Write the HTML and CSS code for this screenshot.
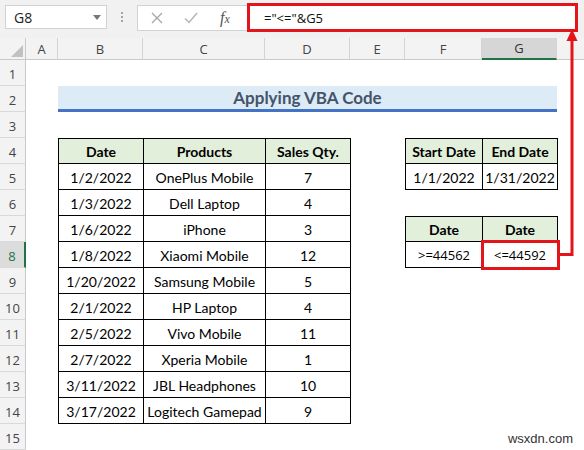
FILE: index.html
```html
<!DOCTYPE html>
<html lang="en">
<head>
    <meta charset="UTF-8">
    <title>Applying VBA Code</title>
    <link rel="stylesheet" href="styles.css">
</head>
<body>
<div class="app">
    <!-- Name box + formula bar -->
    <div class="formula-bar">
        <div class="name-box">
            <span>G8</span>
            <span class="caret"></span>
        </div>
        <div class="grip"><i></i><i></i><i></i></div>
        <div class="fx-box">
            <div class="fx-buttons">
                <svg class="btn-icon" width="12" height="12" viewBox="0 0 12 12">
                    <path d="M1 1 L11 11 M11 1 L1 11" stroke="#a6a6a6" stroke-width="1.3" fill="none"/>
                </svg>
                <svg class="btn-icon" width="14" height="12" viewBox="0 0 14 12">
                    <path d="M1 6.5 L5 10.5 L13 1" stroke="#b3b3b3" stroke-width="1.4" fill="none"/>
                </svg>
                <span class="fx">f<span class="fx-x">x</span></span>
            </div>
            <div class="formula marked">="&lt;="&amp;G5</div>
        </div>
    </div>

    <!-- Worksheet -->
    <div class="sheet">
        <div class="corner"><span class="corner-tri"></span></div>
        <div class="col-head">A</div>
        <div class="col-head">B</div>
        <div class="col-head">C</div>
        <div class="col-head">D</div>
        <div class="col-head">E</div>
        <div class="col-head">F</div>
        <div class="col-head active">G</div>
        <div class="col-head blank"></div>

        <div class="row-head">1</div>
        <div class="row-head">2</div>
        <div class="row-head">3</div>
        <div class="row-head">4</div>
        <div class="row-head">5</div>
        <div class="row-head">6</div>
        <div class="row-head">7</div>
        <div class="row-head active">8</div>
        <div class="row-head">9</div>
        <div class="row-head">10</div>
        <div class="row-head">11</div>
        <div class="row-head">12</div>
        <div class="row-head">13</div>
        <div class="row-head">14</div>
        <div class="row-head">15</div>

        <div class="title-band">Applying VBA Code</div>

        <table class="data sales">
            <thead>
                <tr><th class="w-date">Date</th><th class="w-prod">Products</th><th class="w-qty">Sales Qty.</th></tr>
            </thead>
            <tbody>
                <tr><td>1/2/2022</td><td>OnePlus Mobile</td><td>7</td></tr>
                <tr><td>1/3/2022</td><td>Dell Laptop</td><td>4</td></tr>
                <tr><td>1/6/2022</td><td>iPhone</td><td>3</td></tr>
                <tr><td>1/8/2022</td><td>Xiaomi Mobile</td><td>12</td></tr>
                <tr><td>1/20/2022</td><td>Samsung Mobile</td><td>5</td></tr>
                <tr><td>2/1/2022</td><td>HP Laptop</td><td>4</td></tr>
                <tr><td>2/5/2022</td><td>Vivo Mobile</td><td>11</td></tr>
                <tr><td>2/7/2022</td><td>Xperia Mobile</td><td>1</td></tr>
                <tr><td>3/11/2022</td><td>JBL Headphones</td><td>10</td></tr>
                <tr><td>3/17/2022</td><td>Logitech Gamepad</td><td>9</td></tr>
            </tbody>
        </table>

        <table class="data range">
            <thead>
                <tr><th class="w-f">Start Date</th><th class="w-g">End Date</th></tr>
            </thead>
            <tbody>
                <tr><td>1/1/2022</td><td>1/31/2022</td></tr>
            </tbody>
        </table>

        <table class="data criteria">
            <thead>
                <tr><th class="w-f">Date</th><th class="w-g">Date</th></tr>
            </thead>
            <tbody>
                <tr><td class="plain">&gt;=44562</td><td class="plain picked">&lt;=44592</td></tr>
            </tbody>
        </table>
    </div>

    <!-- arrow from G8 up to the formula -->
    <svg class="callout" width="584" height="450" viewBox="0 0 584 450">
        <path d="M560 254.5 H572 V40" stroke="#e3151a" stroke-width="3" fill="none"/>
        <path d="M572 29 L566.5 41 H577.5 Z" fill="#e3151a"/>
    </svg>

    <div class="watermark">wsxdn.com</div>
</div>
</body>
</html>
```

FILE: styles.css
```css
html, body {
    margin: 0;
    padding: 0;
}

body {
    width: 584px;
    height: 450px;
    overflow: hidden;
    background-color: #fff;
    font-family: "Open Sans", "Noto Sans", sans-serif;
}

.app {
    position: relative;
    width: 584px;
    height: 450px;
}

/* ---------- formula bar ---------- */

.formula-bar {
    display: flex;
    align-items: flex-start;
    height: 38px;
    padding: 5px 6px 0 5px;
    box-sizing: border-box;
    background-color: #f1f1f1;
}

.name-box {
    display: flex;
    align-items: center;
    justify-content: space-between;
    width: 102px;
    height: 24px;
    padding: 0 5px 0 8px;
    box-sizing: border-box;
    background-color: #fff;
    border: 1px solid #d2d2d2;
    font-size: 14px;
    color: #222;
}

.caret {
    width: 0;
    height: 0;
    border-left: 4px solid transparent;
    border-right: 4px solid transparent;
    border-top: 5px solid #777;
}

.grip {
    display: flex;
    flex-direction: column;
    align-items: center;
    gap: 2px;
    width: 30px;
    padding-top: 7px;
}

.grip i {
    width: 2px;
    height: 2px;
    background-color: #a5a5a5;
}

.fx-box {
    flex: 1;
    display: flex;
    height: 24px;
    background-color: #fff;
    border: 1px solid #d2d2d2;
}

.fx-buttons {
    display: flex;
    align-items: center;
    width: 109px;
    padding-left: 13px;
    box-sizing: border-box;
}

.btn-icon {
    margin-right: 21px;
}

.fx {
    margin-left: 1px;
    font-family: "Liberation Serif", serif;
    font-style: italic;
    font-size: 16px;
    color: #555;
}

.fx-x {
    font-size: 12px;
}

.formula {
    flex: 1;
    display: flex;
    align-items: center;
    padding-left: 14px;
    font-size: 13px;
    color: #111;
}

.formula.marked {
    margin: -3px -1px -2px 0;
    border: 3px solid #e3151a;
}

/* ---------- worksheet grid ---------- */

.sheet {
    display: grid;
    grid-template-columns: 26px 32px 85px 122px 85px 55px 77px 75px 1fr;
    grid-template-rows: 22px repeat(15, 26px);
    font-family: "Open Sans", "Noto Sans", sans-serif;
}

.corner {
    grid-column: 1;
    grid-row: 1;
    position: relative;
    background-color: #f3f3f3;
    border-right: 1px solid #c9c9c9;
    border-bottom: 1px solid #c9c9c9;
}

.corner-tri {
    position: absolute;
    right: 2px;
    bottom: 2px;
    width: 0;
    height: 0;
    border-left: 12px solid transparent;
    border-bottom: 12px solid #c1c1c1;
}

.col-head {
    grid-row: 1;
    display: flex;
    align-items: center;
    justify-content: center;
    background-color: #f3f3f3;
    border-right: 1px solid #d4d4d4;
    border-bottom: 1px solid #c9c9c9;
    font-size: 13px;
    color: #444;
}

.col-head.blank {
    border-right: none;
}

.col-head.active {
    background-color: #d6d6d6;
    border-bottom: 2px solid #217346;
    color: #333;
}

.row-head {
    grid-column: 1;
    display: flex;
    align-items: center;
    justify-content: center;
    padding-top: 3px;
    box-sizing: border-box;
    background-color: #f3f3f3;
    border-right: 1px solid #c9c9c9;
    border-bottom: 1px solid #d9d9d9;
    font-size: 13px;
    color: #444;
}

.row-head.active {
    background-color: #dcdcdc;
    border-right: 2px solid #217346;
    color: #217346;
}

/* ---------- sheet content ---------- */

.title-band {
    grid-column: 3 / 9;
    grid-row: 3;
    display: flex;
    align-items: center;
    justify-content: center;
    background-color: #ddebf7;
    border-bottom: 3px solid #4472c4;
    box-sizing: border-box;
    font-family: Lato, "Liberation Sans", sans-serif;
    font-weight: bold;
    font-size: 17px;
    color: #44546a;
}

.data {
    border-collapse: collapse;
    table-layout: fixed;
    width: 100%;
    font-family: Lato, "Liberation Sans", sans-serif;
    font-size: 14px;
    color: #000;
}

.data th,
.data td {
    height: 25px;
    padding: 1px 0 0;
    box-sizing: border-box;
    border: 1px solid #000;
    text-align: center;
    white-space: nowrap;
}

.data th {
    background-color: #e2efda;
    font-weight: bold;
}

.data td.plain {
    font-family: "Open Sans", "Noto Sans", sans-serif;
    font-size: 13px;
}

.data td.picked {
    outline: 3px solid #e3151a;
    outline-offset: -1px;
}

.sales {
    grid-column: 3 / 6;
    grid-row: 5 / 16;
}

.range {
    grid-column: 7 / 9;
    grid-row: 5 / 7;
}

.criteria {
    grid-column: 7 / 9;
    grid-row: 8 / 10;
}

.w-date { width: 85px; }
.w-prod { width: 122px; }
.w-qty { width: 85px; }
.w-f { width: 77px; }
.w-g { width: 75px; }

/* ---------- overlay ---------- */

.callout {
    position: absolute;
    left: 0;
    top: 0;
    pointer-events: none;
}

.watermark {
    position: absolute;
    right: 11px;
    bottom: 4px;
    font-family: "Liberation Sans", Arial, sans-serif;
    font-size: 13px;
    color: #333;
}
```
